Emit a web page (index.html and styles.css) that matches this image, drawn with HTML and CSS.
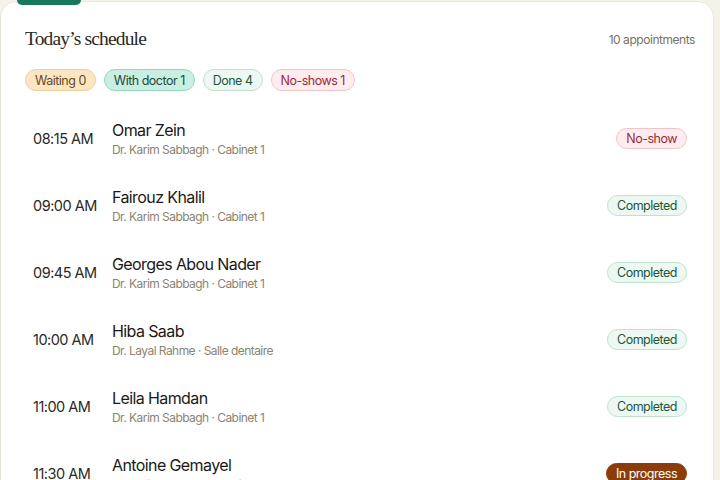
FILE: index.html
```html
<!DOCTYPE html>
<html lang="en">
<head>
<meta charset="utf-8">
<title>Today's schedule</title>
<link rel="stylesheet" href="styles.css">
</head>
<body>
<section class="card">
  <span class="accent"></span>
  <header class="card-head">
    <h2 class="title">Today’s schedule</h2>
    <span class="count">10 appointments</span>
  </header>
  <div class="chips">
    <span class="chip chip-waiting">Waiting 0</span>
    <span class="chip chip-doctor">With doctor 1</span>
    <span class="chip chip-done">Done 4</span>
    <span class="chip chip-noshow">No-shows 1</span>
  </div>
  <ul class="list">
    <li class="row">
      <span class="time">08:15 AM</span>
      <div class="info"><div class="name">Omar Zein</div><div class="sub">Dr. Karim Sabbagh · Cabinet 1</div></div>
      <span class="badge badge-noshow">No-show</span>
    </li>
    <li class="row">
      <span class="time">09:00 AM</span>
      <div class="info"><div class="name">Fairouz Khalil</div><div class="sub">Dr. Karim Sabbagh · Cabinet 1</div></div>
      <span class="badge badge-done">Completed</span>
    </li>
    <li class="row">
      <span class="time">09:45 AM</span>
      <div class="info"><div class="name">Georges Abou Nader</div><div class="sub">Dr. Karim Sabbagh · Cabinet 1</div></div>
      <span class="badge badge-done">Completed</span>
    </li>
    <li class="row">
      <span class="time">10:00 AM</span>
      <div class="info"><div class="name">Hiba Saab</div><div class="sub">Dr. Layal Rahme · Salle dentaire</div></div>
      <span class="badge badge-done">Completed</span>
    </li>
    <li class="row">
      <span class="time">11:00 AM</span>
      <div class="info"><div class="name">Leila Hamdan</div><div class="sub">Dr. Karim Sabbagh · Cabinet 1</div></div>
      <span class="badge badge-done">Completed</span>
    </li>
    <li class="row">
      <span class="time">11:30 AM</span>
      <div class="info"><div class="name">Antoine Gemayel</div><div class="sub">Dr. Karim Sabbagh · Cabinet 1</div></div>
      <span class="badge badge-progress">In progress</span>
    </li>
  </ul>
</section>
</body>
</html>
```
FILE: styles.css
```css
* { box-sizing: border-box; }
html, body { margin: 0; padding: 0; }
body {
  background: #f5f2ea;
  font-family: Inter, "Noto Sans", "Liberation Sans", sans-serif;
  color: #1c1b18;
  overflow: hidden;
}
.card {
  position: relative;
  margin-top: 1px;
  width: 714px;
  background: #ffffff;
  border: 1px solid #ebe6da;
  border-radius: 16px;
  padding: 23px 18px 0 24px;
  min-height: 600px;
}
.accent {
  position: absolute;
  left: 16px;
  top: -2px;
  width: 64px;
  height: 5px;
  background: #17785c;
  border-radius: 0 0 5px 5px;
}
.card-head {
  display: flex;
  justify-content: space-between;
  align-items: center;
  height: 28px;
}
.title {
  margin: 0;
  font-family: "Liberation Serif", "DejaVu Serif", serif;
  font-weight: 400;
  font-size: 19.5px;
  letter-spacing: -0.85px;
  color: #2b2925;
}
.count {
  font-size: 12px;
  letter-spacing: -0.45px;
  color: #77725f;
}
.chips {
  display: flex;
  gap: 8px;
  margin-top: 16px;
}
.chip {
  display: inline-flex;
  align-items: center;
  height: 22px;
  padding: 0 9px;
  border-radius: 999px;
  border: 1px solid;
  font-size: 12.5px;
  letter-spacing: -0.5px;
}
.chip-waiting { background: #fbe6c4; border-color: #f0cf9c; color: #6a4619; }
.chip-doctor { background: #c8efe2; border-color: #93d9c2; color: #1c4a3d; }
.chip-done { background: #ecf8f1; border-color: #bfe2cd; color: #1f5638; }
.chip-noshow { background: #fdedef; border-color: #f2c3c9; color: #a3273a; }
.list {
  list-style: none;
  margin: 14px 0 0;
  padding: 0;
}
.row {
  display: flex;
  align-items: center;
  height: 67px;
  padding: 0 8px;
}
.time {
  width: 79px;
  flex: none;
  font-size: 14.5px;
  letter-spacing: -0.5px;
  color: #2a2926;
}
.info { flex: 1; }
.name {
  font-size: 16px;
  line-height: 20px;
  letter-spacing: -0.6px;
  color: #1a1917;
}
.sub {
  font-size: 12px;
  line-height: 17px;
  margin-top: 1px;
  letter-spacing: -0.55px;
  color: #8a8470;
}
.badge {
  display: inline-flex;
  align-items: center;
  height: 21px;
  padding: 0 9px;
  border-radius: 999px;
  border: 1px solid;
  font-size: 12.5px;
  letter-spacing: -0.5px;
}
.badge-noshow { background: #fdedef; border-color: #f2c3c9; color: #a3273a; }
.badge-done { background: #ecf8f1; border-color: #bfe2cd; color: #1f5638; }
.badge-progress { background: #8a3d0b; border-color: #8a3d0b; color: #ffffff; }
```
